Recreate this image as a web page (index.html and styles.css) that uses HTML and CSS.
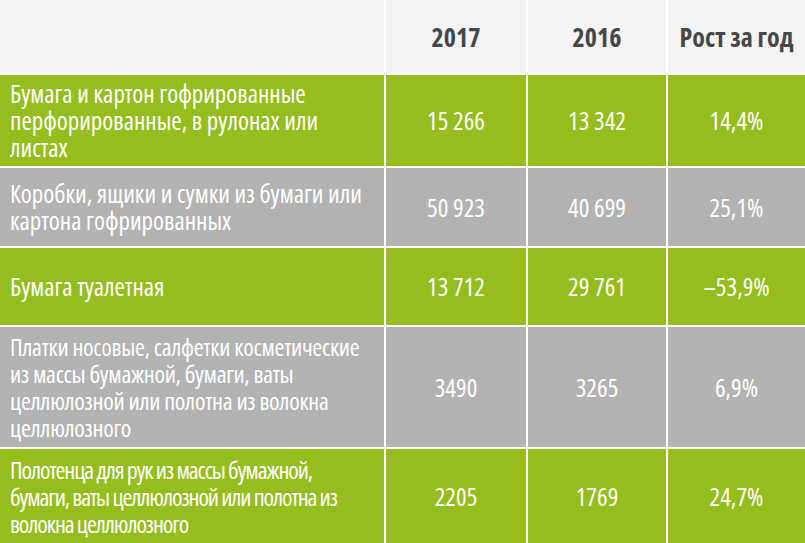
FILE: index.html
```html
<!DOCTYPE html>
<html lang="ru">
<head>
<meta charset="utf-8">
<link rel="stylesheet" href="styles.css">
</head>
<body>
<div class="table">
  <div class="cell head"></div>
  <div class="cell head num">2017</div>
  <div class="cell head num">2016</div>
  <div class="cell head num">Рост за год</div>

  <div class="cell green name"><span>Бумага и картон гофрированные<br>перфорированные, в рулонах или<br>листах</span></div>
  <div class="cell green num">15 266</div>
  <div class="cell green num">13 342</div>
  <div class="cell green num">14,4%</div>

  <div class="cell gray name"><span>Коробки, ящики и сумки из бумаги или<br>картона гофрированных</span></div>
  <div class="cell gray num">50 923</div>
  <div class="cell gray num">40 699</div>
  <div class="cell gray num">25,1%</div>

  <div class="cell green name"><span>Бумага туалетная</span></div>
  <div class="cell green num">13 712</div>
  <div class="cell green num">29 761</div>
  <div class="cell green num">–53,9%</div>

  <div class="cell gray name tight"><span>Платки носовые, салфетки косметические<br>из массы бумажной, бумаги, ваты<br>целлюлозной или полотна из волокна<br>целлюлозного</span></div>
  <div class="cell gray num">3490</div>
  <div class="cell gray num">3265</div>
  <div class="cell gray num">6,9%</div>

  <div class="cell green name tighter"><span>Полотенца для рук из массы бумажной,<br>бумаги, ваты целлюлозной или полотна из<br>волокна целлюлозного</span></div>
  <div class="cell green num">2205</div>
  <div class="cell green num">1769</div>
  <div class="cell green num">24,7%</div>
</div>
</body>
</html>
```
FILE: styles.css
```css
html, body {
  margin: 0;
  padding: 0;
  background: #ffffff;
}
body {
  font-family: "Open Sans", "DejaVu Sans Condensed", sans-serif;
  font-stretch: condensed;
}
.table {
  display: grid;
  grid-template-columns: 384px 140px 138px 137px;
  grid-template-rows: 73px 91px 78px 77px 120px 94px;
  gap: 2px;
  width: 805px;
  height: 543px;
  background: #ffffff;
  overflow: hidden;
}
.cell {
  display: flex;
  align-items: center;
  color: #ffffff;
  font-size: 25px;
  line-height: 27px;
}
.head {
  background: #f4f4f4;
  color: #474747;
  font-weight: bold;
  font-size: 26px;
  padding-top: 2px;
}
.green {
  background: #95bd1e;
}
.gray {
  background: #b3b3b3;
}
.num {
  justify-content: center;
}
.name {
  padding: 0 0 0 10px;
  white-space: nowrap;
}
.tight {
  font-size: 24px;
  letter-spacing: -0.3px;
}
.tighter {
  font-size: 24px;
  letter-spacing: -1.1px;
}
```
